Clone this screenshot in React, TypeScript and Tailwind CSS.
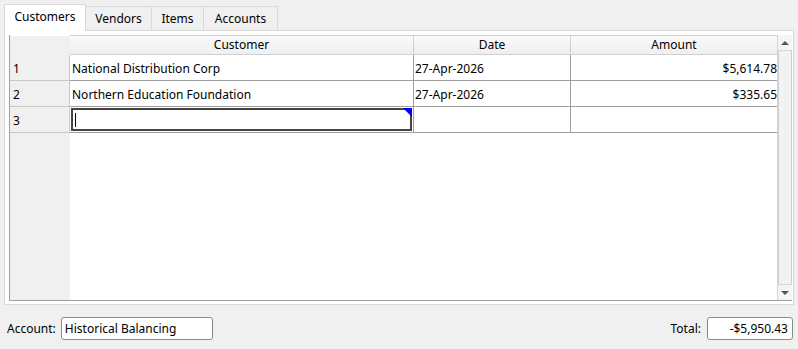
import React from "react";

const rows = [
  { n: "1", customer: "National Distribution Corp", date: "27-Apr-2026", amount: "$5,614.78" },
  { n: "2", customer: "Northern Education Foundation", date: "27-Apr-2026", amount: "$335.65" },
];

function Tabs() {
  return (
    <div className="flex h-[30px] items-end pl-[4px]">
      <div className="relative z-10 -mb-px flex h-[27px] w-[82px] items-center justify-center border border-b-0 border-[#d9d9d9] bg-white pb-[2px]">
        Customers
      </div>
      <div className="flex h-[24px] w-[66px] items-center justify-center border border-b-0 border-l-0 border-[#d9d9d9] bg-[#f0f0f0] pt-[1px]">
        Vendors
      </div>
      <div className="flex h-[24px] w-[52px] items-center justify-center border border-b-0 border-l-0 border-[#d9d9d9] bg-[#f0f0f0] pt-[1px]">
        Items
      </div>
      <div className="flex h-[24px] w-[74px] items-center justify-center border border-b-0 border-l-0 border-[#d9d9d9] bg-[#f0f0f0] pt-[1px]">
        Accounts
      </div>
    </div>
  );
}

function Scrollbar() {
  return (
    <div className="flex w-[15px] flex-col border-l border-[#d4d4d4] bg-[#f0f0f0]">
      <div className="flex h-[16px] items-center justify-center border-b border-[#d4d4d4] bg-[#f5f5f5]">
        <div className="h-0 w-0 border-x-[4px] border-b-[4px] border-x-transparent border-b-[#555]" />
      </div>
      <div className="flex-1 border-x border-[#cfcfcf] bg-[#f2f2f2]" />
      <div className="flex h-[16px] items-center justify-center border-t border-[#d4d4d4] bg-[#f5f5f5]">
        <div className="h-0 w-0 border-x-[4px] border-t-[4px] border-x-transparent border-t-[#555]" />
      </div>
    </div>
  );
}

function Grid() {
  const cell = "flex h-[26px] items-center border-b border-r border-[#a0a0a0] pt-[2px]";
  const label = "flex h-[26px] w-[60px] items-center border-b border-r border-[#c8c8c8] bg-[#f0f0f0] pl-[3px] pt-[2px]";
  return (
    <div className="flex h-[266px] border-b border-l border-[#a0a0a0]">
      <div className="flex flex-1 flex-col">
        {/* header */}
        <div className="flex h-[20px] bg-gradient-to-b from-[#fbfbfb] to-[#eeeeee]">
          <div className="w-[60px] border-t border-white bg-[#f0f0f0]" />
          <div className="flex w-[344px] items-center justify-center border-b border-r border-t border-[#d0d0d0]">
            Customer
          </div>
          <div className="flex w-[157px] items-center justify-center border-b border-r border-t border-[#d0d0d0]">
            Date
          </div>
          <div className="flex flex-1 items-center justify-center border-b border-t border-[#d0d0d0]">
            Amount
          </div>
        </div>
        {rows.map((r) => (
          <div key={r.n} className="flex">
            <div className={label}>{r.n}</div>
            <div className={`${cell} w-[344px] pl-[2px]`}>{r.customer}</div>
            <div className={`${cell} w-[157px] pl-[1px]`}>{r.date}</div>
            <div className={`${cell} flex-1 justify-end border-r-0`}>{r.amount}</div>
          </div>
        ))}
        <div className="flex">
          <div className={label}>3</div>
          <div className="flex h-[26px] w-[344px] border-b border-r border-[#a0a0a0] p-px">
            <div className="relative flex h-full w-full items-center border-2 border-[#444]">
              <div className="ml-[2px] h-[14px] w-px bg-black" />
              <div className="absolute -right-[2px] -top-[2px] h-0 w-0 border-l-[9px] border-t-[9px] border-l-transparent border-t-[#0000ff]" />
            </div>
          </div>
          <div className={`${cell} w-[157px]`} />
          <div className={`${cell} flex-1 border-r-0`} />
        </div>
        <div className="flex flex-1">
          <div className="w-[60px] bg-[#f0f0f0]" />
          <div className="flex-1 bg-white" />
        </div>
      </div>
      <Scrollbar />
    </div>
  );
}

export default function App() {
  return (
    <div className="h-[349px] w-[798px] overflow-hidden bg-[#f0f0f0] font-['Segoe_UI','Noto_Sans',sans-serif] text-[12px] text-black">
      <Tabs />
      <div className="mx-[4px] h-[275px] border border-[#d9d9d9] bg-white pl-[4px] pr-[1px] pt-[4px]">
        <Grid />
      </div>
      <div className="flex items-center px-[7px] pt-[12px]">
        <span className="mr-[5px]">Account:</span>
        <div className="flex h-[23px] w-[152px] items-center rounded-[3px] border border-[#8a8a8a] bg-white pl-[3px]">
          Historical Balancing
        </div>
        <div className="flex-1" />
        <span className="mr-[6px]">Total:</span>
        <div className="mr-[-2px] flex h-[23px] w-[86px] items-center justify-end rounded-[3px] border border-[#8a8a8a] bg-white pr-[4px]">
          -$5,950.43
        </div>
      </div>
    </div>
  );
}
